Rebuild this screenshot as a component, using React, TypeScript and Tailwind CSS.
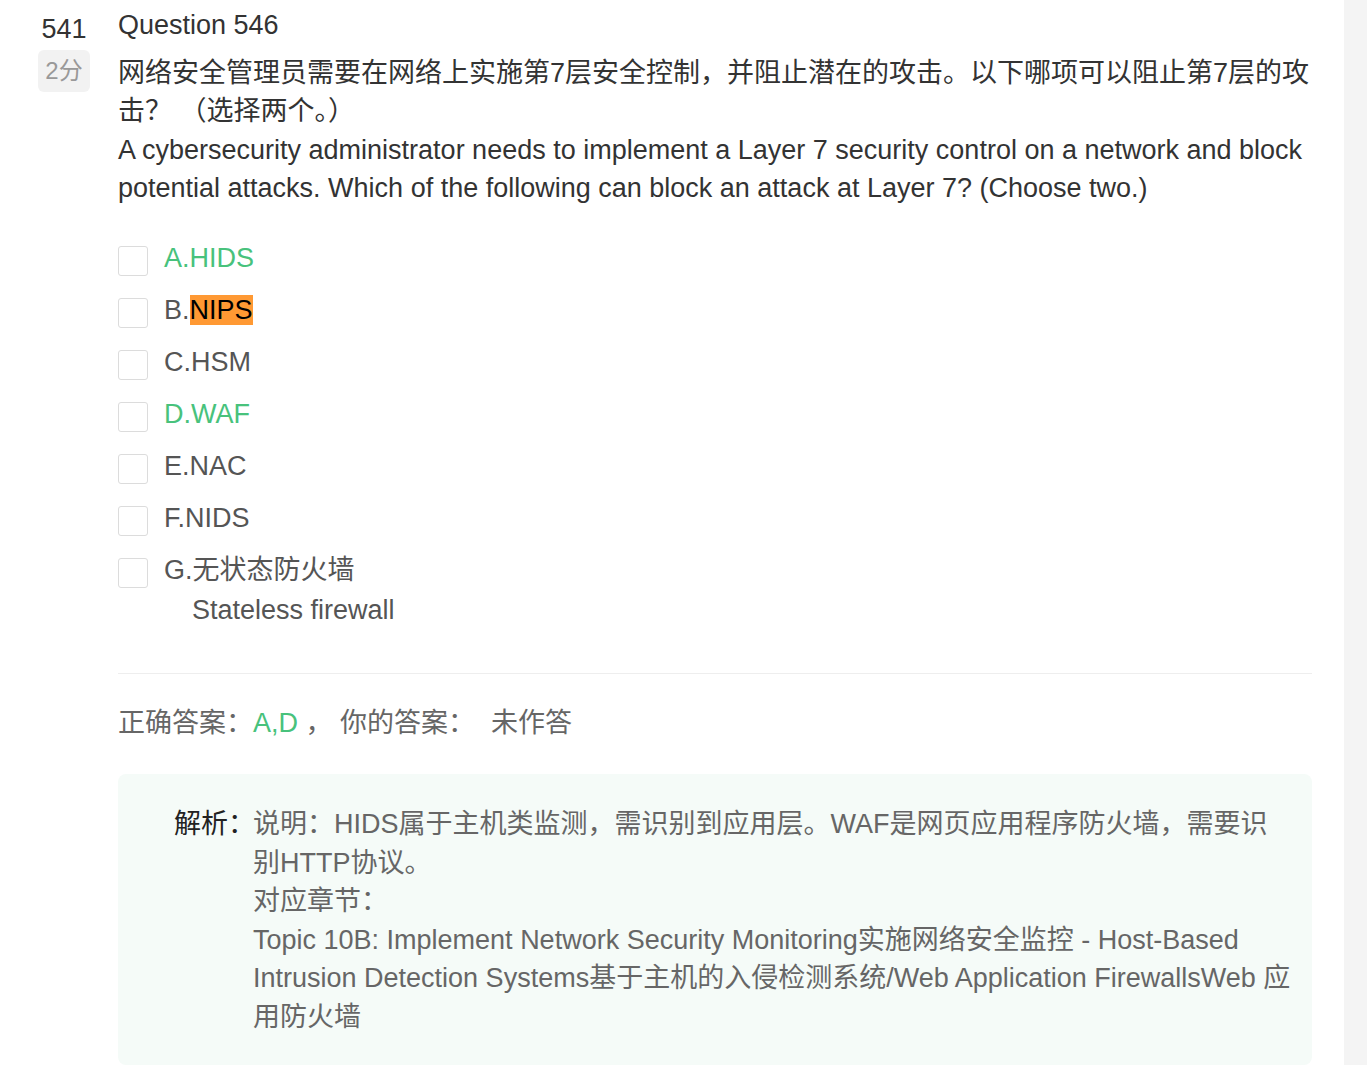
const font = { fontFamily: '"Liberation Sans", "Noto Sans CJK SC", sans-serif' };

type Option = { key: string; label: string; correct?: boolean; mark?: boolean; sub?: string };

const options: Option[] = [
  { key: 'A', label: 'HIDS', correct: true },
  { key: 'B', label: 'NIPS', mark: true },
  { key: 'C', label: 'HSM' },
  { key: 'D', label: 'WAF', correct: true },
  { key: 'E', label: 'NAC' },
  { key: 'F', label: 'NIDS' },
  { key: 'G', label: '无状态防火墙', sub: 'Stateless firewall' },
];

function OptionRow({ opt }: { opt: Option }) {
  return (
    <div className="flex items-start h-[52px]">
      <div className="mt-[7px] w-[30px] h-[30px] shrink-0 rounded-[3px] border border-[#dcdcdc] bg-white" />
      <div className={`ml-4 leading-[38px] ${opt.correct ? 'text-[#48c27c]' : 'text-[#555]'}`}>
        {opt.key}.
        {opt.mark ? <span className="bg-[#ff9933] text-black">{opt.label}</span> : opt.label}
      </div>
    </div>
  );
}

export default function App() {
  return (
    <div className="flex min-h-[1065px] bg-white text-[27px]" style={font}>
      <div className="flex w-[1344px] shrink-0">
        <div className="ml-[38px] w-[52px] shrink-0 flex flex-col items-center pt-[10px]">
          <div className="leading-[38px] text-[#333]">541</div>
          <div className="mt-[2px] w-[52px] h-[42px] rounded-md bg-[#f2f2f2] text-[#999] text-[24px] flex items-center justify-center">
            2分
          </div>
        </div>

        <div className="ml-[28px] w-[1194px] pt-[6px]">
          <div className="leading-[38px] text-[#333]">Question 546</div>
          <div className="mt-[10px] leading-[38.3px] text-[#333]">
            网络安全管理员需要在网络上实施第7层安全控制，并阻止潜在的攻击。以下哪项可以阻止第7层的攻击？ （选择两个。）
            <br />
            A cybersecurity administrator needs to implement a Layer 7 security control on a network and block potential
            attacks. Which of the following can block an attack at Layer 7? (Choose two.)
          </div>

          <div className="mt-[32px]">
            {options.map((opt) =>
              opt.sub ? (
                <div key={opt.key}>
                  <OptionRow opt={opt} />
                  <div className="-mt-[12px] pl-[74px] leading-[38px] text-[#555]">{opt.sub}</div>
                </div>
              ) : (
                <OptionRow key={opt.key} opt={opt} />
              )
            )}
          </div>

          <div className="mt-[44px] border-t border-[#eeeeee]" />

          <div className="mt-[30px] leading-[38px] text-[#666] whitespace-pre">
            正确答案：<span className="text-[#48c27c]">A,D</span> ， 你的答案：<span className="ml-[16px]">未作答</span>
          </div>

          <div className="mt-[32px] rounded-lg bg-[#f5fbf8] pt-[31px] pb-[29px] pl-[56px] pr-[20px] flex">
            <div className="shrink-0 w-[79px] whitespace-nowrap leading-[38.5px] text-[#222]">解析：</div>
            <div className="leading-[38.5px] text-[#666]">
              说明：HIDS属于主机类监测，需识别到应用层。WAF是网页应用程序防火墙，需要识别HTTP协议。
              <br />
              对应章节：
              <br />
              Topic 10B: Implement Network Security Monitoring实施网络安全监控 - Host-Based Intrusion Detection
              Systems基于主机的入侵检测系统/Web Application FirewallsWeb 应用防火墙
            </div>
          </div>
        </div>
      </div>
      <div className="flex-1 bg-[#f4f4f4]" />
    </div>
  );
}
